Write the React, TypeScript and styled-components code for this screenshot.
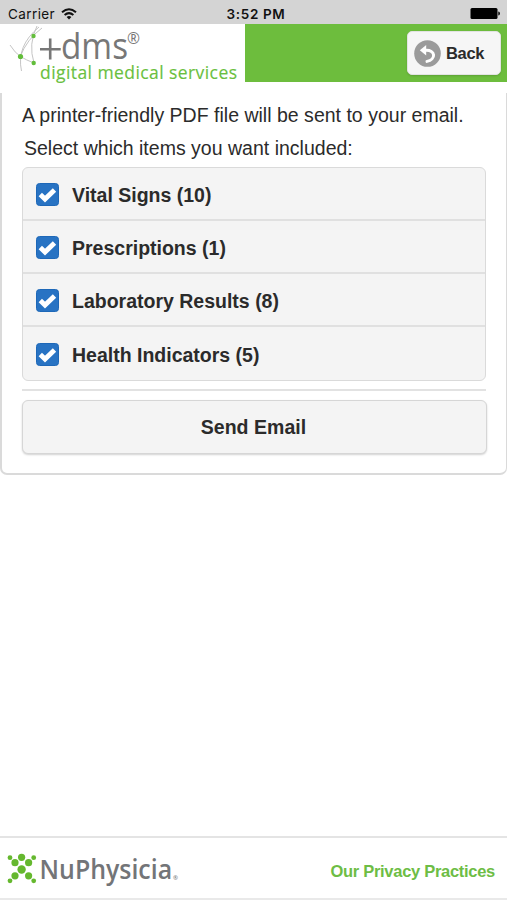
import React from "react";
import styled, { createGlobalStyle } from "styled-components";

const GlobalStyle = createGlobalStyle`
  * { box-sizing: border-box; }
  body { margin: 0; background: #fff; font-family: "Liberation Sans", Arial, sans-serif; color: #2b2b2b; }
  svg { flex: none; overflow: visible; }
`;

const Screen = styled.div`
  display: flex;
  flex-direction: column;
  width: 507px;
  height: 900px;
  overflow: hidden;
  background: #fff;
`;

const StatusBar = styled.div`
  display: grid;
  grid-template-columns: 1fr auto 1fr;
  align-items: center;
  height: 24px;
  flex: none;
  padding: 3px 6px 0 8px;
  background: #d4d4d4;
  color: #111;
  font-family: Inter, sans-serif;
  font-size: 13.5px;
  line-height: 20px;
`;

const Carrier = styled.div`
  display: flex;
  align-items: center;
  gap: 6px;
  letter-spacing: 0.4px;
`;

const Clock = styled.div`
  font-weight: 600;
  letter-spacing: 0.65px;
  padding-left: 3px;
`;

const Battery = styled.div`
  display: flex;
  justify-content: flex-end;
`;

const Header = styled.header`
  display: flex;
  justify-content: space-between;
  flex: none;
  height: 58px;
  background: #6dbd3d;
`;

const LogoPlate = styled.div`
  width: 245px;
  height: 62px;
  background: #fff;
`;

const BackButton = styled.button`
  display: flex;
  align-items: center;
  gap: 5px;
  width: 94px;
  height: 44px;
  margin: 7px 6px 0 0;
  padding: 0 0 0 6px;
  border: 1px solid #e3e3e3;
  border-radius: 5px;
  background: #f6f6f6;
  box-shadow: 0 1px 2px rgba(0, 0, 0, 0.15);
  color: #2b2b2b;
  font: bold 16.5px "Liberation Sans", Arial, sans-serif;
  letter-spacing: -0.3px;
`;

const BackText = styled.span`
  padding-top: 1px;
`;

const Panel = styled.main`
  flex: none;
  height: 382px;
  margin-top: 11px;
  padding: 10px 20px 0 20px;
  border: solid #dadada;
  border-width: 0 1px 2px 2px;
  border-radius: 0 0 7px 7px;
`;

const Line = styled.p<{ $inset?: number }>`
  margin: 0 0 9px ${(p) => p.$inset ?? 0}px;
  font-size: 19.5px;
  line-height: 24px;
  letter-spacing: 0.01px;
  white-space: nowrap;
`;

const Options = styled.div`
  width: 464px;
  margin-top: -2px;
  border: 1px solid #dadada;
  border-radius: 6px;
  background: #f4f4f4;
`;

const Option = styled.label`
  display: flex;
  align-items: center;
  gap: 13px;
  height: 53px;
  padding: 2px 0 0 13px;
  border-bottom: 2px solid #e0e0e0;
  &:last-child { border-bottom: 0; }
`;

const OptionText = styled.span`
  padding-top: 1px;
  font-size: 19.5px;
  font-weight: bold;
`;

const Rule = styled.div`
  width: 464px;
  height: 2px;
  margin: 8px 0 9px;
  background: #e2e2e2;
`;

const SendButton = styled.button`
  display: block;
  width: 465px;
  height: 54px;
  padding: 1px 2px 0 0;
  border: 1px solid #d6d6d6;
  border-radius: 6px;
  background: #f4f4f4;
  box-shadow: 0 1px 2px rgba(0, 0, 0, 0.18);
  color: #2b2b2b;
  font: bold 19.5px "Liberation Sans", Arial, sans-serif;
  letter-spacing: 0.05px;
`;

const Footer = styled.footer`
  display: flex;
  align-items: center;
  justify-content: space-between;
  height: 64px;
  margin-top: auto;
  padding: 5px 12px 2px 6px;
  border-top: 2px solid #e4e4e4;
  border-bottom: 2px solid #e9e9e9;
`;

const PrivacyLink = styled.a`
  padding-top: 3px;
  color: #6dbd45;
  font-size: 16.5px;
  font-weight: bold;
  letter-spacing: -0.29px;
  white-space: nowrap;
`;

const Wifi = () => (
  <svg width="16" height="12" viewBox="0 0 16 12">
    <g fill="none" stroke="#111" strokeWidth="2">
      <path d="M1 4.2Q8-1.8 15 4.2" />
      <path d="M3.6 7Q8 3.2 12.4 7" />
    </g>
    <path d="M5.6 9Q8 7 10.4 9L8 11.6z" fill="#111" />
  </svg>
);

const BatteryIcon = () => (
  <svg width="31" height="13" viewBox="0 0 31 13">
    <rect x=".5" y="1" width="27" height="11" rx="1.5" fill="#000" />
    <path d="M28.3 4.5q1.6.2 1.6 2t-1.6 2z" fill="#000" />
  </svg>
);

const DmsLogo = () => (
  <svg width="245" height="60" viewBox="0 0 245 60">
    <g fill="none" stroke="#c5c5c5" strokeWidth="1">
      <path d="M10 21Q15 29 20.5 32.5T34 39" />
      <path d="M21.5 47Q16 22 39 3" />
      <path d="M42 4Q27 15 20 33" />
      <path d="M37 2Q28 20 34 39" />
    </g>
    <g fill="#62bd3a">
      <circle cx="33.5" cy="12" r="2.2" />
      <circle cx="20.5" cy="32.5" r="2.6" />
      <circle cx="33.7" cy="39" r="2.2" />
    </g>
    <path d="M40 25.3h20.7M50.2 14.5v21" stroke="#777" strokeWidth="2.6" />
    <g fontFamily="Open Sans, sans-serif">
      <text x="61" y="35" fontSize="36" fill="#777" textLength="67" lengthAdjust="spacingAndGlyphs">dms</text>
      <text x="127" y="20" fontSize="16" fill="#777" textLength="13" lengthAdjust="spacingAndGlyphs">®</text>
      <text x="40" y="54.5" fontSize="17.5" fill="#6abf40" stroke="#6abf40" strokeWidth=".15" textLength="197" lengthAdjust="spacing">digital medical services</text>
    </g>
  </svg>
);

const BackIcon = () => (
  <svg width="27" height="27" viewBox="0 0 27 27">
    <circle cx="13.5" cy="13.5" r="13.3" fill="#9b9b9b" />
    <path d="M11 10.4c11.2-1 11 9.2 2 11" fill="none" stroke="#fff" strokeWidth="3" strokeLinecap="round" />
    <path d="M5.8 10.3L12.2 5v10.6z" fill="#fff" />
  </svg>
);

const CheckIcon = () => (
  <svg width="23" height="23" viewBox="0 0 23 23">
    <rect x=".5" y=".5" width="22" height="22" rx="3" fill="#2873c3" stroke="#1e68b8" />
    <path d="M4.3 11.6l4.7 4.5 9.5-9.1" fill="none" stroke="#fff" strokeWidth="4.8" />
  </svg>
);

const moleculeDots = [
  [4, 7.7, 2.4], [15.6, 7.3, 3.6], [27.7, 7.7, 2.4],
  [9, 12.7, 3.6], [22.6, 12.7, 3.6], [15.6, 19.5, 4.2],
  [9, 25.8, 3.6], [22.6, 25.8, 3.6], [4, 30.8, 2.4], [27.7, 30.8, 2.4],
];

const NuPhysiciaLogo = () => (
  <svg width="175" height="40" viewBox="0 0 175 40">
    <g fill="#65b82e">
      {moleculeDots.map(([x, y, r]) => <circle key={`${x}-${y}`} cx={x} cy={y} r={r} />)}
    </g>
    <g fill="#737578" fontFamily="Open Sans, sans-serif" fontWeight="600">
      <text x="33.6" y="28.5" fontSize="27.5" textLength="132.5" lengthAdjust="spacingAndGlyphs">NuPhysicia</text>
      <text x="167" y="30" fontSize="6">®</text>
    </g>
  </svg>
);

const items = [
  "Vital Signs (10)",
  "Prescriptions (1)",
  "Laboratory Results (8)",
  "Health Indicators (5)",
];

export default function App() {
  return (
    <Screen>
      <GlobalStyle />
      <StatusBar>
        <Carrier>Carrier <Wifi /></Carrier>
        <Clock>3:52 PM</Clock>
        <Battery><BatteryIcon /></Battery>
      </StatusBar>
      <Header>
        <LogoPlate><DmsLogo /></LogoPlate>
        <BackButton><BackIcon /><BackText>Back</BackText></BackButton>
      </Header>
      <Panel>
        <Line>A printer-friendly PDF file will be sent to your email.</Line>
        <Line $inset={2}>Select which items you want included:</Line>
        <Options>
          {items.map((label) => (
            <Option key={label}>
              <CheckIcon />
              <OptionText>{label}</OptionText>
            </Option>
          ))}
        </Options>
        <Rule />
        <SendButton>Send Email</SendButton>
      </Panel>
      <Footer>
        <NuPhysiciaLogo />
        <PrivacyLink>Our Privacy Practices</PrivacyLink>
      </Footer>
    </Screen>
  );
}
